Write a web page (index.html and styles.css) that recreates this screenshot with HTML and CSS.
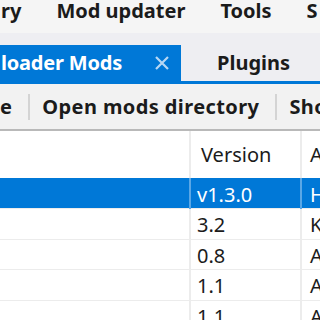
FILE: index.html
```html
<!DOCTYPE html>
<html>
<head>
<meta charset="utf-8" />
<title>Mod manager</title>
<link rel="stylesheet" href="styles.css">
</head>
<body>
<div class="menubar">
  <span class="menu-item first">ry</span>
  <span class="menu-item">Mod updater</span>
  <span class="menu-item">Tools</span>
  <span class="menu-item">S</span>
</div>
<div class="tabstrip">
  <div class="tab active">
    <span>loader Mods</span>
    <svg class="close" width="14" height="14" viewBox="0 0 14 14"><path d="M1 1L13 13M13 1L1 13" stroke="#b7d7f4" stroke-width="2.2" fill="none"/></svg>
  </div>
  <div class="tab">Plugins</div>
</div>
<div class="toolbar">
  <span class="tool first">e</span>
  <span class="sep"></span>
  <span class="tool">Open mods directory</span>
  <span class="sep"></span>
  <span class="tool">Sho</span>
</div>
<table class="mods" cellspacing="0">
  <tr class="head"><td></td><td>Version</td><td>A</td></tr>
  <tr class="selected"><td></td><td>v1.3.0</td><td>H</td></tr>
  <tr><td></td><td>3.2</td><td>K</td></tr>
  <tr><td></td><td>0.8</td><td>A</td></tr>
  <tr><td></td><td>1.1</td><td>A</td></tr>
  <tr><td></td><td>1.1</td><td>A</td></tr>
</table>
</body>
</html>
```
FILE: styles.css
```css
body{margin:0;padding:0;width:320px;height:320px;overflow:hidden;background:#fff;font-family:"Noto Sans","Open Sans",sans-serif;font-size:20px;line-height:20px;color:#1b1b1b;}
.menubar{height:33px;background:#f5f5f5;display:flex;white-space:nowrap;font-weight:bold;line-height:22px;overflow:hidden;}
.menu-item{margin-left:35px;}
.menu-item.first{margin-left:1px;}
.tabstrip{height:51px;background:#eeeef2;display:flex;align-items:flex-end;border-bottom:3px solid #0078d7;box-sizing:border-box;}
.tab{height:36px;display:flex;align-items:center;font-weight:bold;white-space:nowrap;}
.tab.active{width:181px;background:#0078d7;color:#fff;padding-left:1px;box-sizing:border-box;letter-spacing:-0.2px;}
.tab .close{margin-left:33px;}
.tab + .tab{padding-left:36px;}
.toolbar{height:45px;background:#f2f2f2;border-bottom:2px solid #b9b9b9;display:flex;align-items:center;white-space:nowrap;font-weight:bold;letter-spacing:0.4px;overflow:hidden;}
.sep{width:2px;height:26px;background:#d4d4d4;margin:0 12px 0 16px;flex:none;}
.mods{border-collapse:collapse;width:320px;table-layout:fixed;}
.mods td{height:30.5px;padding:3px 0 0 6px;border-left:2px solid #ececec;border-bottom:1px solid #ececec;white-space:nowrap;overflow:hidden;box-sizing:border-box;}
.mods td:first-child{width:190px;border-left:none;padding:0;}
.mods td:nth-child(2){width:111px;}
.mods td:nth-child(3){padding-left:8px;}
.mods tr.head td{height:47px;padding-top:0;border-bottom:none;}
.mods tr.head td:nth-child(2){padding-left:10px;}
.mods tr.selected td{background:#0078d7;color:#fff;border-left-color:#5aa7e6;}
.mods tr.selected td:first-child{border-left:none;}
```
